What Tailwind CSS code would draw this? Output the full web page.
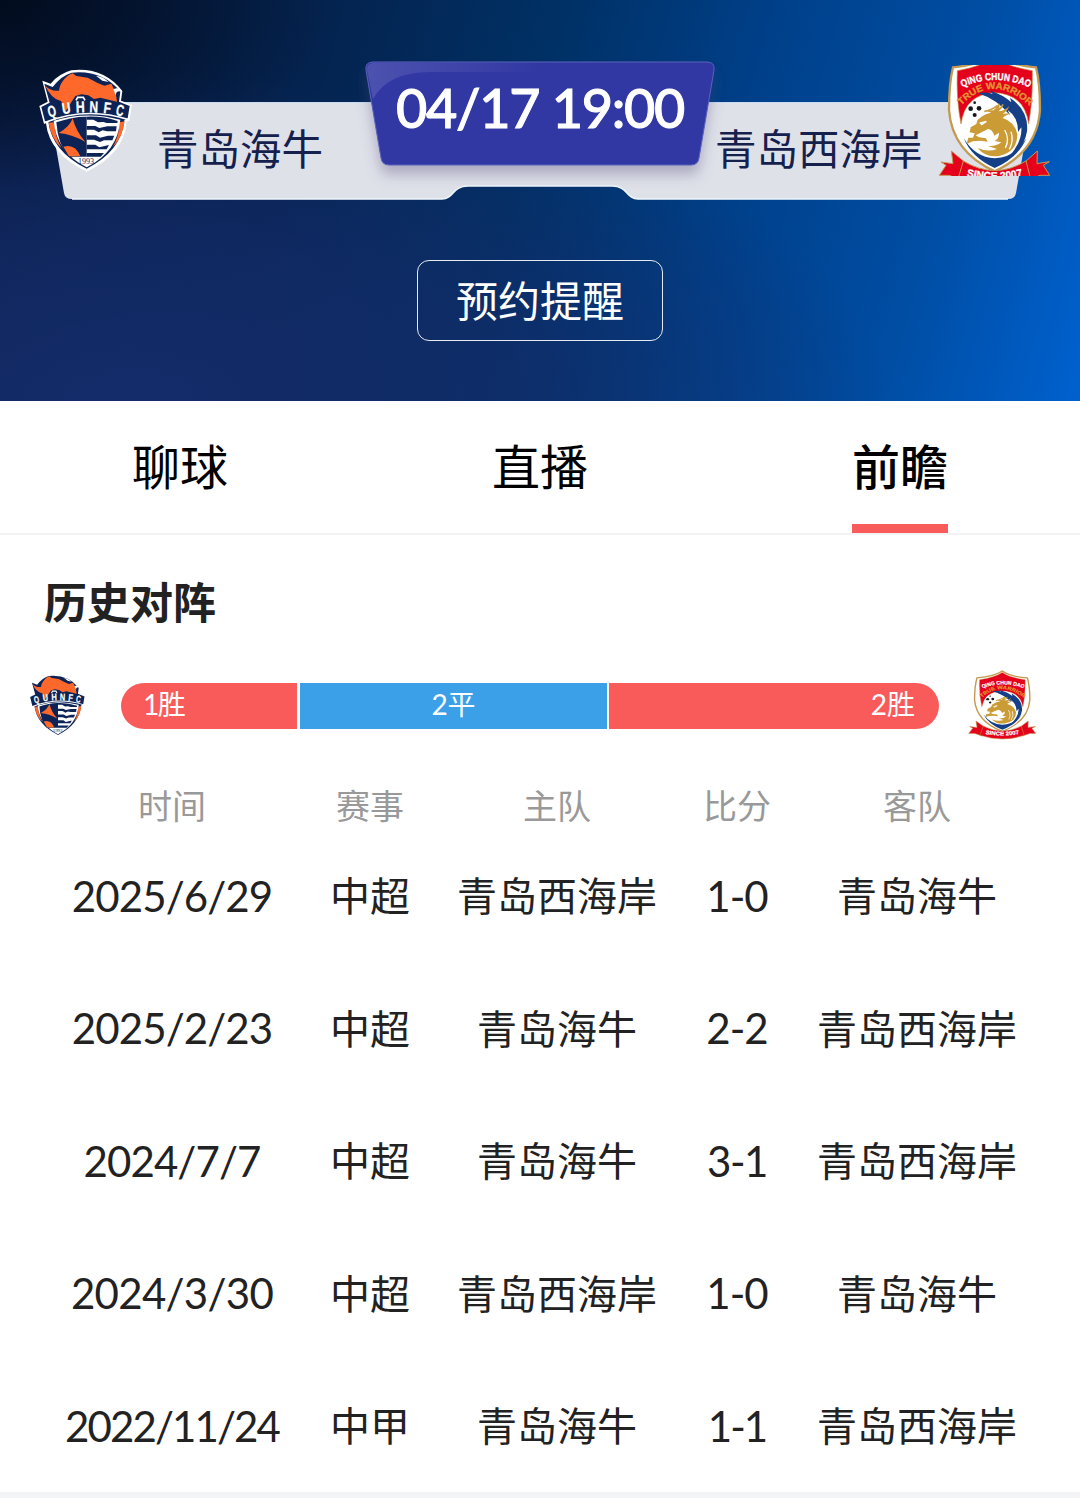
<!DOCTYPE html>
<html lang="zh-CN">
<head>
    <meta charset="UTF-8">
    <meta name="viewport" content="width=device-width, initial-scale=1.0">
    <title>青岛海牛 vs 青岛西海岸</title>
    <script src="https://cdn.jsdelivr.net/npm/@tailwindcss/browser@4"></script>
    <style>
        body {
            font-family: Lato, 'Noto Sans CJK SC', sans-serif;
        }
        .match-bg {
            background:
                radial-gradient(ellipse 330px 190px at 0 0, #020c1e 0%, rgba(2, 12, 30, 0) 100%),
                radial-gradient(ellipse 760px 330px at 12% 100%, rgba(21, 45, 108, .95) 0%, rgba(20, 43, 104, .7) 50%, rgba(18, 40, 98, 0) 100%),
                linear-gradient(105deg, #07193f 0%, #04234f 28%, #003166 48%, #00408a 66%, #004ea5 84%, #0061cf 100%);
        }
    </style>
</head>
<body class="bg-white text-[#222]">
    <!-- Stemmi delle squadre -->
    <svg class="hidden" xmlns="http://www.w3.org/2000/svg">
        <defs>
            <g id="hainiu">
                <path d="M67 92L92 101Q115 72 154 61Q250 50 307 123L303 152L336 164L328 212L320 215Q312 312 200 365Q88 312 78 220L72 221L58 168L83 155Z" fill="#fff"/>
                <path d="M73 101L98 111Q125 76 155 68Q247 59 301 125L297 155L329 168L323 205L313 211Q304 304 200 356Q96 304 85 215L75 214L64 171L89 158Z" fill="#0d2355"/>
                <path d="M86 218L102 217Q106 262 124 294Q93 265 86 218ZM314 214L299 217Q296 263 278 292Q307 265 314 214Z" fill="#ff682b"/>
                <path d="M101 212Q200 182 301 209Q294 304 200 352Q108 304 101 212Z" fill="#fff"/>
                <path d="M109 217Q160 199 200 200V320H145Q114 285 109 217Z" fill="#0d2355"/>
                <path d="M158 205Q150 230 116 249Q158 253 196 276Q168 244 158 205Z" fill="#ff682b"/>
                <path d="M130 290Q165 279 181 319H147Z" fill="#ff682b"/>
                <path d="M200 200Q248 198 293 213L292 219H260L250 216L234 217L220 209H200ZM200 228H226L238 234L262 229H290L288 244H261L248 241L236 247L222 239H200ZM200 256H228L240 263L264 257H283L277 271H252L240 276L222 269H200ZM200 284H226L238 292L267 285L260 298H200ZM200 309H252L242 320H200Z" fill="#0d2355"/>
                <path d="M75 106Q91 125 117 122Q120 103 128 94Q140 76 158 70L169 78L203 83L233 99L253 107L274 101Q289 128 291 155L241 143L222 147L205 136L185 133L166 138L151 161L134 188L124 154Q93 147 75 106Z" fill="#ff682b"/>
                <path d="M228 77Q250 80 266 96L247 92ZM280 118Q297 110 304 124Q286 121 288 137Z" fill="#fff"/>
                <path d="M72 218Q200 168 326 209" fill="none" stroke="#fff" stroke-width="5"/>
                <path d="M168 151L173 142H190L195 151" fill="none" stroke="#fff" stroke-width="5"/>
                <g fill="#fff" stroke="#fff" font-family="Liberation Sans, sans-serif" font-weight="700" font-size="50" text-anchor="middle">
                    <text transform="translate(99 200) rotate(-13) scale(.64 .95)">Q</text>
                    <text transform="translate(141 191) rotate(-8) scale(.7 .95)">U</text>
                    <text transform="translate(181 187) rotate(-2) scale(.74 .95)">H</text>
                    <text transform="translate(221 187) rotate(2) scale(.72 .95)">N</text>
                    <text transform="translate(260 190) rotate(7) scale(.72 .95)">F</text>
                    <text transform="translate(297 197) rotate(11) scale(.64 .95)">C</text>
                </g>
                <text x="198" y="342" font-family="Liberation Serif, serif" font-size="24" text-anchor="middle" fill="#0d2355">1993</text>
            </g>
            <g id="xihaian">
                <path d="M194 12Q230 44 318 52Q330 100 330 180Q322 305 194 364Q66 305 57 180Q57 100 69 52Q155 44 194 12Z" fill="#fff" stroke="#c39a50" stroke-width="7"/>
                <path d="M194 20Q230 50 307 62Q309 150 296 222Q284 132 194 128Q106 132 93 222Q78 145 82 62Q155 50 194 20Z" fill="#e5001b" stroke="#c39a50" stroke-width="2"/>
                <circle cx="194" cy="224" r="94" fill="#fff"/>
                <path d="M144 130Q173 124 188 132L180 122Q220 134 244 157L240 143Q297 182 291 244Q283 296 239 318Q277 274 274 232L264 246Q265 202 233 180L240 196Q200 147 144 130Z" fill="#153f87"/>
                <path d="M101 264Q135 322 194 325Q253 324 289 265Q266 322 194 354Q124 322 101 264Z" fill="#153f87"/>
                <path d="M119 247L122 232L139 222L143 209Q165 190 184 188L168 182L191 181Q205 166 207 158Q212 173 204 184Q224 184 237 169Q235 182 218 191L242 190Q225 197 218 204Q254 215 262 253Q262 306 209 317Q168 325 143 294Q175 308 201 297L171 287Q194 292 214 277L194 273Q208 264 207 248L193 257Q187 238 174 237L149 250L137 256L147 262L168 265L173 275L151 272L128 274L110 282L115 263L129 263L134 250Z" fill="#cb9b35"/>
                <path d="M163 184Q183 182 203 166M185 190Q210 183 219 163" fill="none" stroke="#cb9b35" stroke-width="5"/>
                <path d="M151 219L169 214L155 224ZM224 240Q240 267 226 294M243 245Q252 272 238 298" fill="none" stroke="#fff" stroke-width="4"/>
                <circle cx="134" cy="178" r="23" fill="#fff"/>
                <g fill="#17171b">
                    <circle cx="122" cy="176" r="7"/><circle cx="147" cy="175" r="7"/><circle cx="134" cy="195" r="6"/><circle cx="134" cy="158" r="4"/>
                </g>
                <path d="M64 303L103 335L94 391L58 376H28L48 346L33 336L69 341ZM322 303L286 335L294 391L330 376H359L340 346L358 335L321 341Z" fill="#e5001b" stroke="#c39a50" stroke-width="3"/>
                <path d="M100 333Q194 390 288 333L302 387Q194 430 84 387Z" fill="#e5001b" stroke="#c39a50" stroke-width="3"/>
                <path id="arcTop" d="M97 112Q194 68 297 112" fill="none"/>
                <path id="arcMid" d="M94 166Q190 66 300 169" fill="none"/>
                <path id="arcLow" d="M104 377Q194 400 284 377" fill="none"/>
                <g font-family="Liberation Sans, sans-serif" font-weight="700">
                    <text font-size="30" fill="#fff" stroke="#fff"><textPath href="#arcTop" textLength="208" lengthAdjust="spacingAndGlyphs">QING CHUN DAO</textPath></text>
                    <text font-size="28" fill="#e39532" stroke="#e39532"><textPath href="#arcMid" textLength="234" lengthAdjust="spacingAndGlyphs">TRUE WARRIOR</textPath></text>
                    <text font-size="32" fill="#fff" stroke="#fff"><textPath href="#arcLow" startOffset="6" textLength="170" lengthAdjust="spacingAndGlyphs">SINCE 2007</textPath></text>
                </g>
            </g>
        </defs>
    </svg>

    <header class="match-bg relative h-[401px] overflow-hidden">
        <!-- Pannello con i nomi e targhetta dell'orario -->
        <svg class="absolute inset-0" width="1080" height="401" viewBox="0 0 1080 401">
            <defs>
                <filter id="shadow" x="-10%" y="-10%" width="120%" height="140%">
                    <feDropShadow dx="0" dy="9" stdDeviation="7" flood-color="#4b4075" flood-opacity=".35"/>
                </filter>
                <linearGradient id="shine" x1="0" y1="0" x2="1" y2="0">
                    <stop offset="0" stop-color="#fff" stop-opacity=".13"/>
                    <stop offset="1" stop-color="#fff" stop-opacity="0"/>
                </linearGradient>
            </defs>
            <path d="M48 102H1032L1016 193Q1015 199 1008 199H638C626 199 628 186 612 186H468C452 186 454 199 442 199H72Q65 199 64 193Z" fill="#dfe1e9"/>
            <path d="M48 102.500H1032" stroke="#c9dcf2"/>
            <path d="M1008 199H638C626 199 628 186 612 186H468C452 186 454 199 442 199H72" fill="none" stroke="#f0f7fb" stroke-width="1.500"/>
            <path d="M373 62H707Q715 62 714 70L699 158Q698 165 691 165H389Q382 165 381 158L366 70Q365 62 373 62Z" fill="#3038a3" stroke="#5a62ba" filter="url(#shadow)"/>
            <path d="M373 63H540V72H430Q388 72 373 99L367 70Q367 63 373 63Z" fill="url(#shine)"/>
        </svg>
        <div class="relative flex h-[200px]">
            <svg class="absolute left-5 top-[50px]" width="130" height="130" viewBox="0 0 390 390"><use href="#hainiu"/></svg>
            <span class="w-[366px] pl-[157px] pt-[127px] text-[41.5px] leading-[44px] text-[#15214c]">青岛海牛</span>
            <span class="w-[348px] pt-[76px] text-center text-[54px] leading-[64px] font-medium tracking-[-1.3px] whitespace-nowrap text-white [-webkit-text-stroke:1px_white]">04/17 19:00</span>
            <span class="pl-px pt-[127px] text-[41.5px] leading-[44px] text-[#15214c]">青岛西海岸</span>
            <svg class="absolute left-[930px] top-[65px]" width="130" height="111" viewBox="0 45 390 333"><use href="#xihaian"/></svg>
        </div>
        <button class="relative mx-auto mt-[60px] flex h-[81px] w-[246px] items-center justify-center rounded-[12px] border border-white/90 pt-[2px] text-[42px] text-white">预约提醒</button>
    </header>

    <nav class="grid h-[134px] grid-cols-3 border-b-2 border-[#f3f3f5] text-center text-[48px] leading-[132px] text-black">
        <a>聊球</a>
        <a>直播</a>
        <a class="relative font-medium">前瞻<i class="absolute bottom-0 left-1/2 h-[9px] w-24 -translate-x-1/2 bg-[#f95b5b]"></i></a>
    </nav>

    <main class="h-[957px]">
        <h2 class="pl-[44px] pt-[35px] text-[43px] leading-[66px] font-bold">历史对阵</h2>

        <div class="relative mt-[47px] ml-[121px] flex h-[46px] w-[818px] text-[28px] leading-[43px] text-white">
            <svg class="absolute left-[-104px] top-[-21px]" width="80" height="80" viewBox="0 0 390 390"><use href="#hainiu"/></svg>
            <div class="mr-[3px] w-[176px] rounded-l-full bg-[#f95b5b] pl-[22px] tracking-[-1.5px]">1胜</div>
            <div class="mr-[2px] w-[307px] bg-[#3ca0e9] text-center">2平</div>
            <div class="w-[330px] rounded-r-full bg-[#f95b5b] pr-6 text-right">2胜</div>
            <svg class="absolute left-[842px] top-[-14px]" width="79" height="72" viewBox="0 0 390 420" preserveAspectRatio="none"><use href="#xihaian"/></svg>
        </div>

        <div class="ml-[45px] mt-[47px] grid grid-cols-[254px_142px_232px_128px_232px] text-center text-[34px] leading-[60px] text-[#999]">
            <span>时间</span><span>赛事</span><span>主队</span><span>比分</span><span>客队</span>
        </div>
        <div class="ml-[45px] -mt-[6px] grid grid-cols-[254px_142px_232px_128px_232px] auto-rows-[132.5px] items-center text-center text-[40px] whitespace-nowrap">
            <span class="text-[42px] tracking-[-0.9px]">2025/6/29</span><span>中超</span><span>青岛西海岸</span><span class="text-[42px] tracking-[-0.9px]">1-0</span><span>青岛海牛</span>
            <span class="text-[42px] tracking-[-0.9px]">2025/2/23</span><span>中超</span><span>青岛海牛</span><span class="text-[42px] tracking-[-0.9px]">2-2</span><span>青岛西海岸</span>
            <span class="text-[42px] tracking-[-0.9px]">2024/7/7</span><span>中超</span><span>青岛海牛</span><span class="text-[42px] tracking-[-1.5px]">3-1</span><span>青岛西海岸</span>
            <span class="text-[42px] tracking-[-0.7px]">2024/3/30</span><span>中超</span><span>青岛西海岸</span><span class="text-[42px] tracking-[-0.9px]">1-0</span><span>青岛海牛</span>
            <span class="text-[42px] tracking-[-1.9px]">2022/11/24</span><span>中甲</span><span>青岛海牛</span><span class="text-[42px] tracking-[-2px]">1-1</span><span>青岛西海岸</span>
        </div>
    </main>
    <div class="h-[6px] bg-[#f3f4f6]"></div>
</body>
</html>
